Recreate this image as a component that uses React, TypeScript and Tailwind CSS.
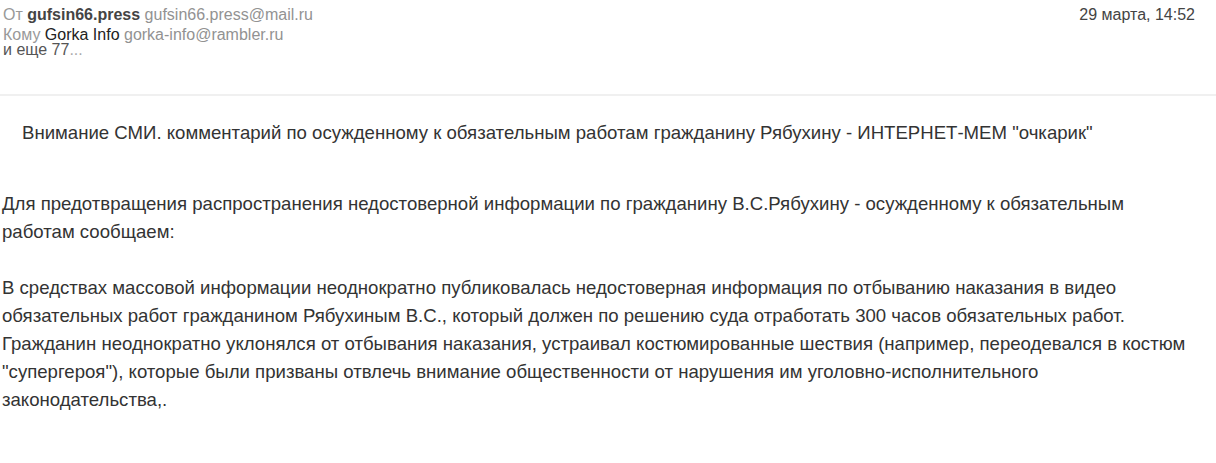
import React from 'react';

const para1 = [
  'Для предотвращения распространения недостоверной информации по гражданину В.С.Рябухину - осужденному к обязательным',
  'работам сообщаем:',
];

const para2 = [
  'В средствах массовой информации неоднократно публиковалась недостоверная информация по отбыванию наказания в видео',
  'обязательных работ гражданином Рябухиным В.С., который должен по решению суда отработать 300 часов обязательных работ.',
  'Гражданин неоднократно уклонялся от отбывания наказания, устраивал костюмированные шествия (например, переодевался в костюм',
  '"супергероя"), которые были призваны отвлечь внимание общественности от нарушения им уголовно-исполнительного',
  'законодательства,.',
];

const App: React.FC = () => {
  return (
    <div className="w-[1216px] h-[463px] bg-white overflow-hidden font-['Liberation_Sans',Arial,sans-serif] text-[#333]">
      <header className="flex justify-between pl-[3px] pr-[21px] pt-[5px] h-[96px] border-b-2 border-[#f0f0f0]">
        <div className="text-[16px] leading-[20px]">
          <div>
            <span className="text-[#999]">От </span>
            <span className="font-semibold text-[#444]">gufsin66.press</span>
            <span className="text-[#929292]"> gufsin66.press@mail.ru</span>
          </div>
          <div>
            <span className="text-[#999]">Кому </span>
            <span className="text-[#222]">Gorka Info</span>
            <span className="text-[#929292]"> gorka-info@rambler.ru</span>
          </div>
          <div className="leading-[10px] text-[#555]">
            и еще 77<span className="text-[#aaa]">...</span>
          </div>
        </div>
        <div className="text-[16px] leading-[20px] text-[#444]">29 марта, 14:52</div>
      </header>

      <main className="text-[18.6px] leading-[28px] pl-[2px]">
        <p className="pl-[20px] pt-[23px] whitespace-nowrap">
          Внимание СМИ. комментарий по осужденному к обязательным работам гражданину Рябухину - ИНТЕРНЕТ-МЕМ "очкарик"
        </p>
        <p className="pt-[43px]">
          {para1.map((l) => (
            <span key={l} className="block whitespace-nowrap">{l}</span>
          ))}
        </p>
        <p className="pt-[28px]">
          {para2.map((l) => (
            <span key={l} className="block whitespace-nowrap">{l}</span>
          ))}
        </p>
      </main>
    </div>
  );
};

export default App;
